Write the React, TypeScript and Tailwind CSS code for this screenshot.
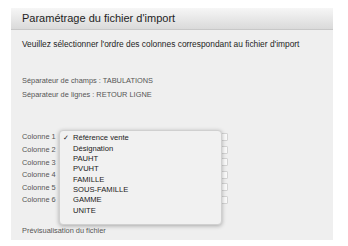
const columns = [1, 2, 3, 4, 5, 6]
const options = ["Référence vente", "Désignation", "PAUHT", "PVUHT", "FAMILLE", "SOUS-FAMILLE", "GAMME", "UNITE"]

export default function App() {
  return (
    <div className="w-[348px] h-[246px] bg-white pt-[8px] pl-[11px] font-['Liberation_Sans',Arial,sans-serif]">
      <div className="w-[322px] h-[232px] bg-[#efefef] flex flex-col">
        <div className="h-[22px] flex items-center px-[11px] bg-gradient-to-b from-[#f6f6f6] to-[#dadada] border-b border-[#c8c8c8]">
          <span className="text-[11px] text-[#1e1e1e]">Paramétrage du fichier d'import</span>
        </div>
        <div className="px-[11px] flex flex-col">
          <p className="mt-[9px] text-[8.4px] leading-[10px] text-[#1e1e1e]">
            Veuillez sélectionner l'ordre des colonnes correspondant au fichier d'import
          </p>
          <div className="mt-[27px] flex flex-col gap-[4px] text-[7.4px] leading-[10px] text-[#555]">
            <p>Séparateur de champs : TABULATIONS</p>
            <p>Séparateur de lignes :  RETOUR LIGNE</p>
          </div>
          <div className="relative mt-[32px] flex flex-col gap-[2.6px]">
            {columns.map((n) => (
              <div key={n} className="h-[10px] flex items-center">
                <span className="w-[38px] text-[7.4px] text-[#555]">Colonne {n}</span>
                <div className="w-[168px] h-[8px] bg-[#fafafa] border border-[#d4d4d4] rounded-[1px]" />
              </div>
            ))}
            <div className="absolute left-[37px] top-[-2px] w-[163px] h-[95px] bg-[#f1f1f1] rounded-[4px] border border-[#d0d0d0] shadow-[0_1px_4px_rgba(0,0,0,0.3)] pt-[2px]">
              {options.map((o, i) => (
                <div key={o} className="h-[10.3px] flex items-center text-[7.6px] text-[#1a1a1a]">
                  <span className="w-[13px] pl-[3px] text-[7px]">{i === 0 ? "✓" : ""}</span>
                  <span>{o}</span>
                </div>
              ))}
            </div>
          </div>
          <p className="mt-[21px] text-[7.4px] leading-[10px] text-[#555]">Prévisualisation du fichier</p>
        </div>
      </div>
    </div>
  )
}
